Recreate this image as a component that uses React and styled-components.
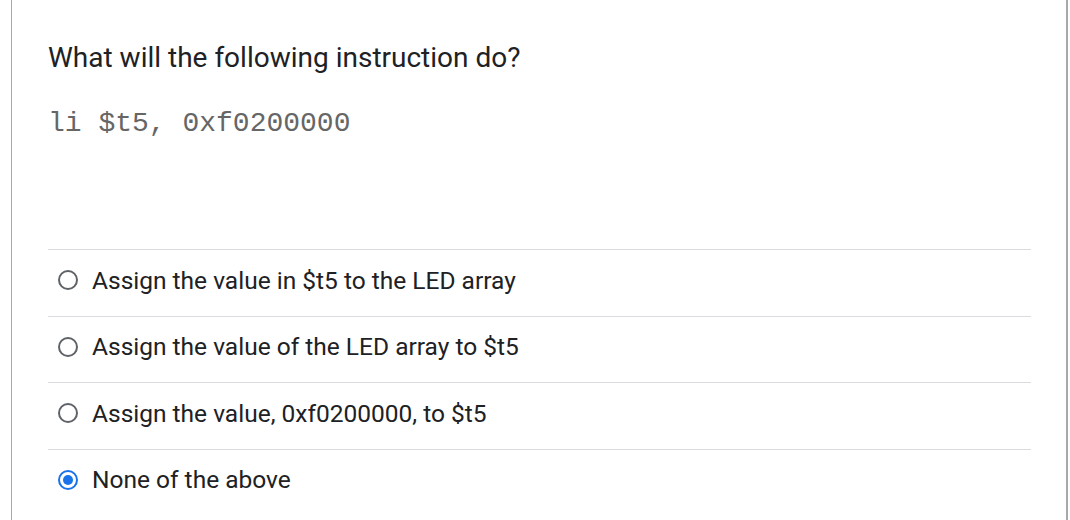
import styled, { createGlobalStyle } from 'styled-components';

const GlobalStyle = createGlobalStyle`
  html, body {
    margin: 0;
    padding: 0;
    background: #ffffff;
  }
  body {
    font-family: Roboto, "Liberation Sans", Arial, sans-serif;
    color: #202124;
  }
`;

const Card = styled.div`
  margin-left: 11px;
  width: 1057px;
  height: 520px;
  box-sizing: border-box;
  border-left: 1px solid #a8a8a8;
  border-right: 2px solid #a8a8a8;
  padding: 41px 35px 0 36px;
  background: #fff;
`;

const Question = styled.h2`
  margin: 0;
  font-size: 28px;
  line-height: 34px;
  font-weight: 400;
  color: #202124;
`;

const Code = styled.pre`
  margin: 33px 0 0 0;
  font-family: "Liberation Mono", "Courier New", monospace;
  font-size: 28px;
  line-height: 32px;
  color: #666666;
  font-weight: 400;
`;

const Options = styled.div`
  margin-top: 109px;
  display: flex;
  flex-direction: column;
`;

const Option = styled.label`
  display: flex;
  align-items: center;
  gap: 14px;
  height: 66.5px;
  box-sizing: border-box;
  border-top: 1px solid #dadce0;
  padding: 0 0 5px 10px;
  font-size: 24.5px;
  color: #202124;
  cursor: pointer;
`;

const Radio = styled.span`
  width: 20px;
  height: 20px;
  box-sizing: border-box;
  border-radius: 50%;
  border: 2px solid ${(p) => (p.checked ? '#1a73e8' : '#5f6368')};
  display: flex;
  align-items: center;
  justify-content: center;
  flex-shrink: 0;
  &::after {
    content: '';
    width: 10px;
    height: 10px;
    border-radius: 50%;
    background: #1a73e8;
    display: ${(p) => (p.checked ? 'block' : 'none')};
  }
`;

const choices = [
  'Assign the value in $t5 to the LED array',
  'Assign the value of the LED array to $t5',
  'Assign the value, 0xf0200000, to $t5',
  'None of the above',
];

export default function App() {
  const selected = 3;
  return (
    <>
      <GlobalStyle />
      <Card>
        <Question>What will the following instruction do?</Question>
        <Code>li $t5, 0xf0200000</Code>
        <Options>
          {choices.map((c, i) => (
            <Option key={c}>
              <Radio checked={i === selected} />
              {c}
            </Option>
          ))}
        </Options>
      </Card>
    </>
  );
}
